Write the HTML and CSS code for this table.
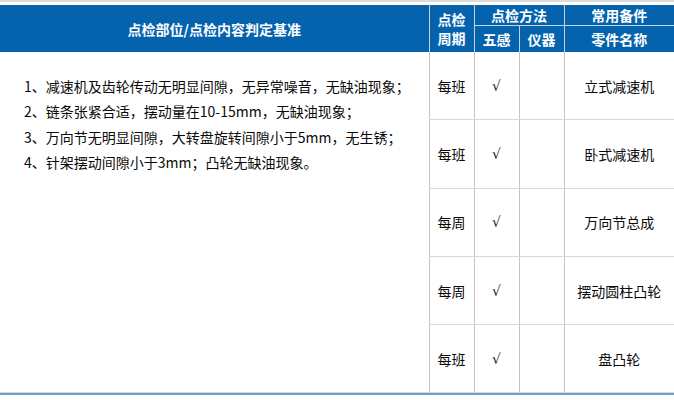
FILE: index.html
```html
<!DOCTYPE html>
<html lang="zh-CN">
<head>
<meta charset="utf-8">
<title>点检标准</title>
<link rel="stylesheet" href="styles.css">
</head>
<body>
<div class="wrap">
  <table class="check">
    <colgroup>
      <col class="col-part">
      <col class="col-narrow">
      <col class="col-narrow">
      <col class="col-narrow">
      <col class="col-spare">
    </colgroup>
    <thead>
      <tr class="head-top">
        <th rowspan="2" class="h-main">点检部位/点检内容判定基准</th>
        <th rowspan="2" class="h-cycle"><span class="hl">点检</span><span class="hl">周期</span></th>
        <th colspan="2" class="h-group">点检方法</th>
        <th class="h-group">常用备件</th>
      </tr>
      <tr class="head-sub">
        <th>五感</th>
        <th>仪器</th>
        <th>零件名称</th>
      </tr>
    </thead>
    <tbody>
      <tr>
        <td rowspan="5" class="content">
          <p class="item">1、减速机及齿轮传动无明显间隙，无异常噪音，无缺油现象；</p>
          <p class="item">2、链条张紧合适，摆动量在10-15mm，无缺油现象；</p>
          <p class="item">3、万向节无明显间隙，大转盘旋转间隙小于5mm，无生锈；</p>
          <p class="item">4、针架摆动间隙小于3mm；凸轮无缺油现象。</p>
        </td>
        <td>每班</td>
        <td class="tick">√</td>
        <td></td>
        <td>立式减速机</td>
      </tr>
      <tr>
        <td>每班</td>
        <td class="tick">√</td>
        <td></td>
        <td>卧式减速机</td>
      </tr>
      <tr>
        <td>每周</td>
        <td class="tick">√</td>
        <td></td>
        <td>万向节总成</td>
      </tr>
      <tr>
        <td>每周</td>
        <td class="tick">√</td>
        <td></td>
        <td>摆动圆柱凸轮</td>
      </tr>
      <tr>
        <td>每班</td>
        <td class="tick">√</td>
        <td></td>
        <td>盘凸轮</td>
      </tr>
    </tbody>
  </table>
</div>
</body>
</html>
```

FILE: styles.css
```css
html, body {
  margin: 0;
  padding: 0;
  background: #ffffff;
}

body {
  font-family: "Noto Sans CJK SC", "Noto Sans", "Liberation Sans", sans-serif;
  font-size: 14px;
  color: #0a0a0a;
}

.wrap {
  width: 674px;
  border-top: 2px solid #dcdcdc;
  padding-top: 3px;
}

.check {
  width: 674px;
  table-layout: fixed;
  border-collapse: collapse;
  border-bottom: 1px solid #d6d6d6;
}

.col-part { width: 429px; }
.col-narrow { width: 45px; }
.col-spare { width: 110px; }

.check th {
  background: #0563ae;
  color: #ffffff;
  font-weight: bold;
  font-size: 14px;
  text-align: center;
  vertical-align: middle;
  padding: 0;
  border-left: 1px solid #c9cfd8;
  line-height: 18px;
}

.check th.h-main {
  border-left: none;
}

.hl {
  display: block;
  height: 18.5px;
  line-height: 18.5px;
  overflow: visible;
}

.head-top th {
  height: 20px;
}

.head-top .h-group {
  border-bottom: 1px solid #c9d4e2;
}

.head-sub th {
  height: 26px;
}

.check td {
  height: 67.3px;
  padding: 0;
  text-align: center;
  vertical-align: middle;
  border-left: 1px solid #c4c4c4;
  border-bottom: 1px solid #d8d8d8;
  line-height: 20px;
}

.check td.content {
  border-left: none;
  text-align: left;
  vertical-align: top;
  padding: 22px 0 0 24px;
  border-bottom: 1px solid #d6d6d6;
}

.item {
  margin: 0;
  line-height: 25.4px;
  white-space: nowrap;
}

.tick {
  font-family: "DejaVu Serif", serif;
  font-size: 14px;
  color: #1a1a2a;
}

.wrap::after {
  content: "";
  display: block;
  height: 2px;
  background: #6f9fd8;
}
```
